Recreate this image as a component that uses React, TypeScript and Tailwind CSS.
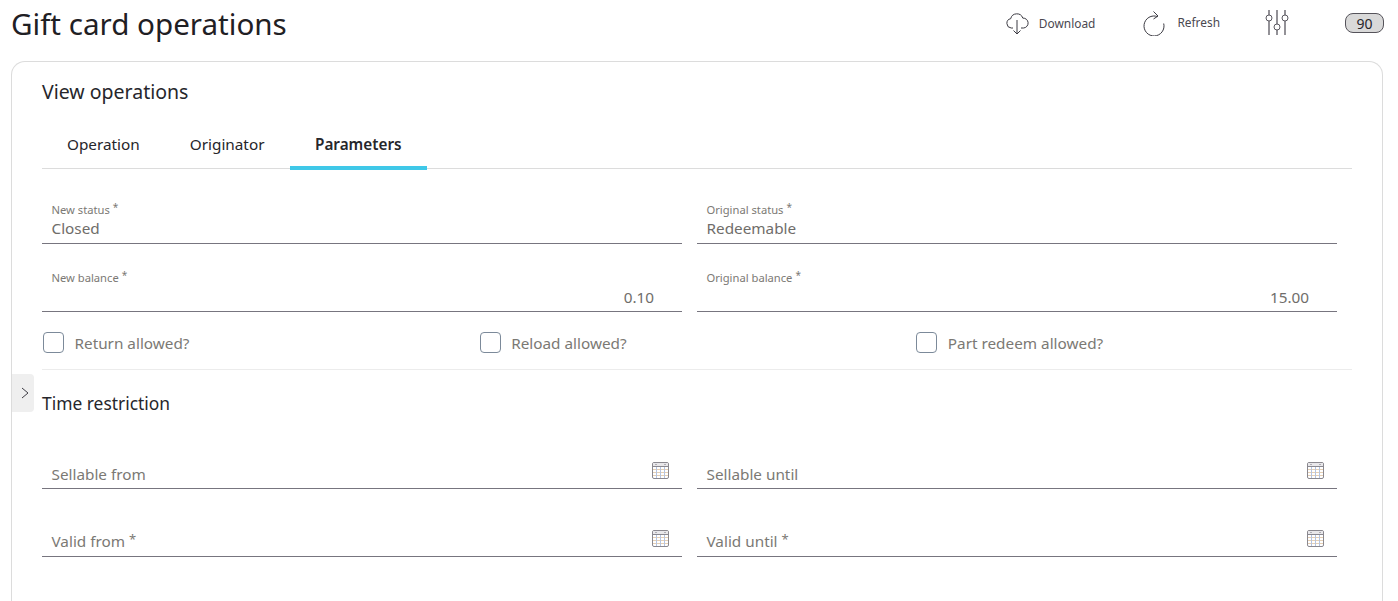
const FONT = "font-['Noto_Sans','Open_Sans',sans-serif]";

function CalendarIcon() {
  return (
    <svg width="17" height="17" viewBox="0 0 17 17" fill="none" className="shrink-0">
      <rect x="0.5" y="0.5" width="16" height="16" rx="1.5" fill="#fff" stroke="#8a888f" />
      <rect x="1" y="1" width="15" height="3.5" fill="#e8e7ea" />
      <path d="M1 4.5h15" stroke="#8a888f" />
      <path d="M1 7.5h15M1 10.5h15M1 13.5h15" stroke="#e5cfb4" />
      <path d="M4.5 5v11M8.5 5v11M12.5 5v11" stroke="#b5c4e0" />
      <path d="M4 2v1M13 2v1" stroke="#77757f" />
    </svg>
  );
}

function Field({
  label,
  value,
  required,
  alignRight,
}: {
  label: string;
  value: string;
  required?: boolean;
  alignRight?: boolean;
}) {
  return (
    <div className="mr-[15px] h-[48px] border-b border-[#77757f] pl-[9.5px] pr-[10px]">
      <div className="mt-[5px] h-[17px] text-[11.2px] leading-[17px] text-[#7b7974]">
        {label}
        {required && <span className="relative top-[-3px] ml-[3px] text-[10px]">*</span>}
      </div>
      <div
        className={
          alignRight
            ? "mt-[1px] pr-[18px] text-right text-[15.3px] leading-[20px] text-[#6f6d6a]"
            : "text-[15.3px] leading-[20px] text-[#6f6d6a]"
        }
      >
        {value}
      </div>
    </div>
  );
}

function DateField({ label, required }: { label: string; required?: boolean }) {
  return (
    <div className="mr-[15px] flex h-[48px] items-end justify-between border-b border-[#77757f] pl-[9.5px] pr-[13px]">
      <span className="pb-[4px] text-[15.3px] leading-[20px] text-[#7b7974]">
        {label}
        {required && <span className="relative top-[-3px] ml-[4px] text-[13px]">*</span>}
      </span>
      <span className="pb-[9px]">
        <CalendarIcon />
      </span>
    </div>
  );
}

function Check({ label }: { label: string }) {
  return (
    <label className="flex items-center gap-[10.5px]">
      <span className="ml-px h-[21px] w-[21px] rounded-[4px] border border-[#7c8a9a] bg-white" />
      <span className="text-[15.3px] leading-[20px] text-[#7b7974]">{label}</span>
    </label>
  );
}

export default function App() {
  return (
    <div className={`${FONT} h-[601px] w-full overflow-hidden bg-white`}>
      <header className="flex h-[61px] items-start pl-[11px]">
        <h1 className="mt-[4px] text-[29.6px] leading-[40px] text-[#1f2024]">Gift card operations</h1>
        <div className="ml-auto flex items-center pt-[10px] text-[11.9px] text-[#4a4850]">
          <button className="flex items-center gap-[9px]">
            <svg width="24" height="24" viewBox="0 0 24 24" fill="none" stroke="#3b3a42" strokeWidth="1">
              <path d="M7 17H5.2A4.7 4.7 0 0 1 4.7 7.7 6.3 6.3 0 0 1 16.8 7.1 4.9 4.9 0 0 1 17.5 17H15" />
              <path d="M11 9v14M7.5 19.5l3.5 3.5 3.5-3.5" />
            </svg>
            <span className="pt-px">Download</span>
          </button>
          <button className="ml-[47px] flex items-center gap-[11px]">
            <svg width="24" height="26" viewBox="0 0 24 26" fill="none" stroke="#3b3a42" strokeWidth="1">
              <path d="M15.5 6.6A10 10 0 1 0 21.7 13.5" />
              <path d="M11.5 1.5L16 6l-4.5 3" />
            </svg>
            Refresh
          </button>
          <svg className="ml-[45px]" width="26" height="26" viewBox="0 0 26 26" fill="none" stroke="#5a5860" strokeWidth="1">
            <path d="M4 0v5M4 11v14M12 0v14M12 20v5M20 0v5M20 11v14" strokeWidth="1.3" />
            <circle cx="4" cy="8" r="3" />
            <circle cx="12" cy="17" r="3" />
            <circle cx="20" cy="8" r="3" />
          </svg>
          <span className="ml-[54px] mr-[14px] flex h-[20px] w-[39px] items-center justify-center rounded-[8px] border border-[#55535a] bg-[#d9d9d9] text-[14px] text-[#26252b]">
            90
          </span>
        </div>
      </header>

      <main className="relative ml-[11px] mr-[15px] h-[560px] rounded-t-[14px] border border-b-0 border-[#dcdcdc] px-[30px]">
        <h2 className="pt-[16px] text-[19.5px] leading-[28px] text-[#26262b]">View operations</h2>

        <nav className="mt-[18px] flex h-[45px] border-b border-[#dcdcdc] text-[15.3px] text-[#26262b]">
          <div className="flex h-[45px] items-center px-[25px] pb-[5px]">Operation</div>
          <div className="flex h-[45px] items-center pl-[25px] pr-[25.5px] pb-[5px]">Originator</div>
          <div className="flex h-[46px] items-center border-b-[4px] border-[#3fc8e8] px-[25px] pb-[1px] font-semibold">
            Parameters
          </div>
        </nav>

        <div className="mt-[27px] grid grid-cols-2">
          <Field label="New status" value="Closed" required />
          <Field label="Original status" value="Redeemable" required />
        </div>
        <div className="mt-[20px] grid grid-cols-2">
          <Field label="New balance" value="0.10" required alignRight />
          <Field label="Original balance" value="15.00" required alignRight />
        </div>

        <div className="mt-[20px] grid grid-cols-3 border-b border-[#ececec] pb-[16px]">
          <Check label="Return allowed?" />
          <Check label="Reload allowed?" />
          <Check label="Part redeem allowed?" />
        </div>

        <h3 className="mt-[20px] text-[17.4px] leading-[26px] text-[#26262b]">Time restriction</h3>

        <div className="mt-[25px] grid grid-cols-2">
          <DateField label="Sellable from" />
          <DateField label="Sellable until" />
        </div>
        <div className="mt-[20px] grid grid-cols-2">
          <DateField label="Valid from" required />
          <DateField label="Valid until" required />
        </div>

        <button className="absolute left-0 top-[312px] flex h-[38px] w-[22px] items-center justify-center rounded-r-[4px] bg-[#efefef] pl-[4px]">
          <svg width="10" height="14" viewBox="0 0 10 14" fill="none" stroke="#3f3e46" strokeWidth="1">
            <path d="M2 2l6 5-6 5" />
          </svg>
        </button>
      </main>
    </div>
  );
}
